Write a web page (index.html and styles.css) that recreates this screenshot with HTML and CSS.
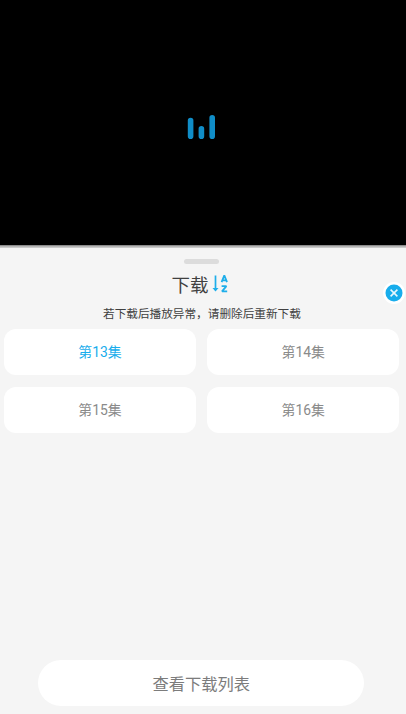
FILE: index.html
```
<!DOCTYPE html>
<html lang="zh-CN">
<head>
<meta charset="utf-8">
<title>下载</title>
<link rel="stylesheet" href="styles.css">
</head>
<body>
<main class="app">
  <section class="player">
    <svg class="loader" width="28" height="26" viewBox="0 0 28 26" fill="none" stroke="#108dc7" stroke-width="5.6" stroke-linecap="round">
      <path d="M3.6 6.6V22.2M14.4 14.8V22.2M25.2 3.8V22.2"/>
    </svg>
  </section>
  <section class="sheet">
    <div class="handle"></div>
    <header class="heading">
      <h1 class="title">下载</h1>
      <svg class="sort" width="17" height="20" viewBox="0 0 17 20" fill="none" stroke="#1eaeea">
        <path stroke-width="1.7" d="M3.5 1.5V15.5"/>
        <path fill="#1eaeea" stroke="none" d="M.5 14H6.5L3.5 17.6Z"/>
        <path stroke-width="1.8" stroke-linejoin="bevel" d="M9.6 8.2L12.3 1.4L15 8.2M10.4 6.3H14.2M9.6 12.1H14.4L10 17.3H15.2"/>
      </svg>
    </header>
    <p class="notice">若下载后播放异常，请删除后重新下载</p>
    <div class="episodes">
      <div class="episode active">第13集</div>
      <div class="episode">第14集</div>
      <div class="episode">第15集</div>
      <div class="episode">第16集</div>
    </div>
    <div class="list-button">查看下载列表</div>
    <svg class="close" width="24" height="24" viewBox="0 0 24 24">
      <circle cx="12" cy="12" r="11" fill="#fff"/>
      <circle cx="12" cy="12" r="8.5" fill="#18adec"/>
      <path d="M8.6 8.6L15.4 15.4M15.4 8.6L8.6 15.4" stroke="#e8f7fd" stroke-width="1.6"/>
    </svg>
  </section>
</main>
</body>
</html>
```
FILE: styles.css
```
* { box-sizing: border-box; }
body {
  margin: 0;
  background: #f5f5f5;
  font-family: Roboto, "Noto Sans CJK SC", sans-serif;
}
.app {
  display: flex;
  flex-direction: column;
  height: 714px;
  overflow: hidden;
}
.player {
  flex: none;
  height: 245px;
  background: #000;
}
.loader {
  display: block;
  margin: 114px 0 0 187px;
}
.sheet {
  position: relative;
  flex: 1;
  display: flex;
  flex-direction: column;
  padding: 3px 0 8px;
  background: linear-gradient(#8c8c8c 0 1px, #b5b5b5 1px 2px, #cacaca 2px 3px, #f5f5f5 3px);
}
.handle {
  flex: none;
  width: 35px;
  height: 5px;
  margin: 11px 0 0 184px;
  border-radius: 3px;
  background: #dcdcdc;
}
.heading {
  display: flex;
  flex: none;
  align-items: center;
  height: 34px;
  margin: 3px 0 0 171.5px;
  gap: 3px;
}
.title {
  margin: 3px 0 0;
  font-size: 18.5px;
  line-height: 34px;
  font-weight: 400;
  color: #404040;
}
.notice {
  height: 18px;
  margin: 4px 0 0 103px;
  font-size: 11.65px;
  line-height: 18px;
  white-space: nowrap;
  color: #404040;
}
.episodes {
  display: grid;
  grid-template-columns: 192.3px 192.3px;
  grid-auto-rows: 46.5px;
  gap: 11.6px 11px;
  margin: 5.5px 0 0 3.8px;
}
.episode {
  border-radius: 12px;
  background: #fff;
  text-align: center;
  font-size: 13.9px;
  line-height: 46.5px;
  color: #8a8a8a;
}
.active { color: #18adec; }
.list-button {
  width: 326px;
  height: 46.5px;
  margin: auto 0 0 38.3px;
  padding-top: 2px;
  border-radius: 24px;
  background: #fff;
  text-align: center;
  font-size: 16.3px;
  line-height: 46.5px;
  color: #7c7c7c;
}
.close {
  position: absolute;
  top: 36px;
  left: 381.5px;
}
```
